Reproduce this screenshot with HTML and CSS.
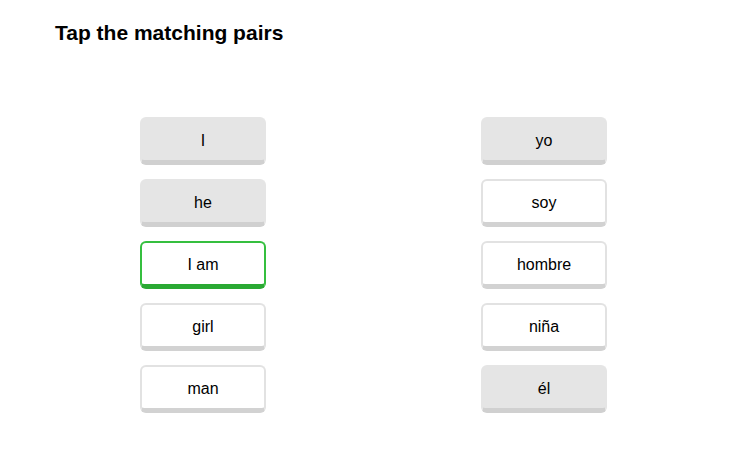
FILE: index.html
```html
<!DOCTYPE html>
<html>
<head>
<meta charset="utf-8">
<link rel="stylesheet" href="styles.css">
</head>
<body>
<h1 class="title">Tap the matching pairs</h1>
<div class="board">
  <div class="col">
    <div class="card done">I</div>
    <div class="card done">he</div>
    <div class="card selected">I am</div>
    <div class="card">girl</div>
    <div class="card">man</div>
  </div>
  <div class="col">
    <div class="card done">yo</div>
    <div class="card">soy</div>
    <div class="card">hombre</div>
    <div class="card">niña</div>
    <div class="card done">él</div>
  </div>
</div>
</body>
</html>
```
FILE: styles.css
```css
html, body {
  margin: 0;
  padding: 0;
  background: #ffffff;
}
body {
  font-family: "Liberation Sans", Arial, sans-serif;
  color: #111;
}
.title {
  margin: 21px 0 0 55px;
  font-size: 21px;
  line-height: 24px;
  font-weight: bold;
  color: #000;
}
.board {
  display: flex;
  gap: 215px;
  padding-left: 140px;
  margin-top: 72px;
}
.col {
  display: flex;
  flex-direction: column;
  gap: 14px;
}
.card {
  box-sizing: border-box;
  width: 126px;
  height: 48px;
  border: 2px solid #e2e2e2;
  border-bottom: 5px solid #d2d2d2;
  border-radius: 6px;
  background: #fff;
  display: flex;
  align-items: center;
  justify-content: center;
  font-size: 16px;
  color: #000;
  padding-top: 2px;
}
.card.done {
  background: #e5e5e5;
  border-color: #e5e5e5;
  border-bottom-color: #d0d0d0;
}
.card.selected {
  border-color: #35bf3f;
  border-bottom-color: #2aa933;
}
```
